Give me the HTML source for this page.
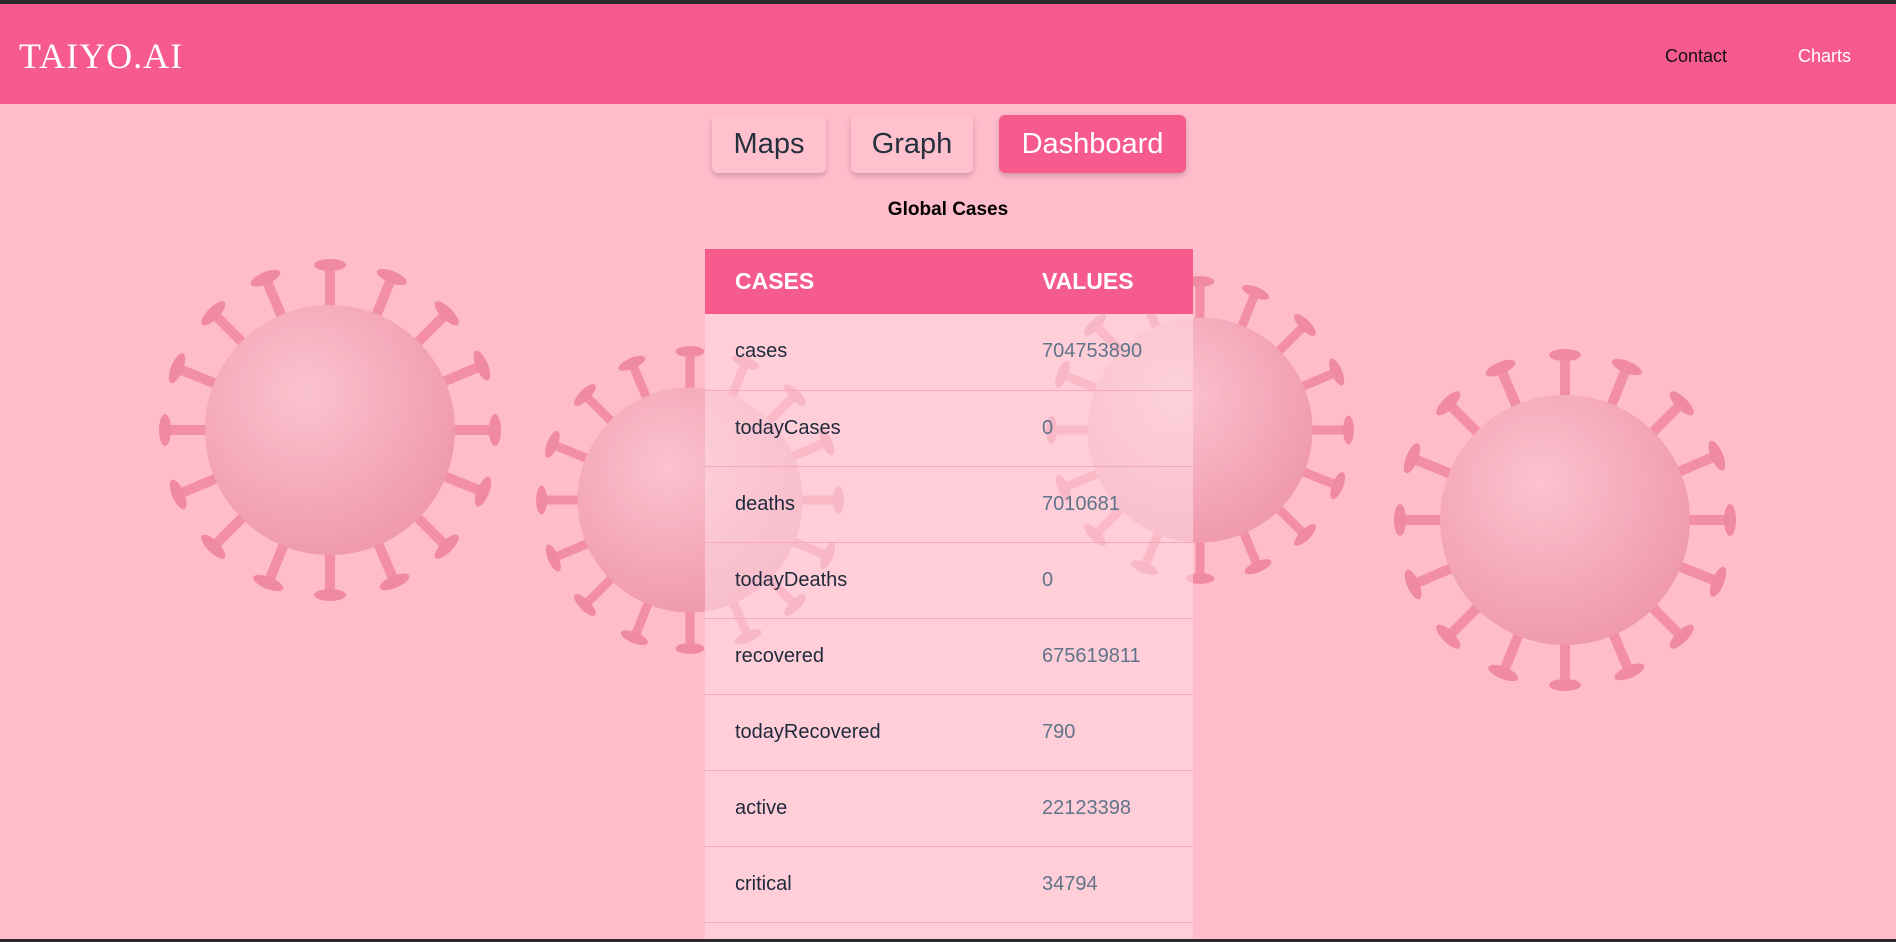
<!DOCTYPE html>
<html style="width:1896px;height:942px;overflow:hidden"><head><meta charset="utf-8"><style>
*{margin:0;padding:0;box-sizing:border-box}
html,body{width:1896px;height:942px;overflow:hidden}
body{background:#ffbccb;font-family:"Liberation Sans",sans-serif;position:relative}
.topbar{position:absolute;left:0;top:0;width:1896px;height:4px;background:#2a2a2e}
.bot{position:absolute;left:0;top:939px;width:1896px;height:3px;background:#2a2a2e}
nav{position:absolute;left:0;top:4px;width:1896px;height:100px;background:#f75b8e}
.logo{position:absolute;left:19px;top:31px;font-family:"Liberation Serif",serif;font-size:36px;color:#fff;letter-spacing:1px}
.nl{position:absolute;top:42px;font-size:18px}
#bg{position:absolute;left:0;top:104px}
.btn{position:absolute;top:115px;height:58px;border-radius:6px;background:#ffc1cd;box-shadow:0 3px 6px rgba(0,0,0,.18);color:#25303e;font-size:29px;line-height:58px;text-align:center}
.title{position:absolute;left:0;width:1896px;top:199px;text-align:center;font-weight:bold;font-size:19px;color:#000}
.wrap{position:absolute;left:705px;top:249px;width:488px;height:690px;overflow:hidden}
table{width:488px;border-collapse:collapse}
th{background:#f55c8d;color:#fff;font-size:23px;font-weight:bold;text-align:left;height:65px}
td{height:76px;font-size:20px;color:#1e293b;border-bottom:1px solid #f7a9bc;background:rgba(255,220,228,.55)}
td.v{color:#5f7488}
th:first-child,td:first-child{padding-left:30px;width:337px}
tr.last td{height:17px;border-bottom:none}
</style></head><body>
<svg id="bg" width="1896" height="835" viewBox="0 104 1896 835">
<defs>
<radialGradient id="g" cx="40%" cy="35%" r="65%"><stop offset="0" stop-color="#fbc3cf"/><stop offset="1" stop-color="#f09aae"/></radialGradient>
<g id="sp"><rect x="-5" y="-165" width="10" height="50" fill="#f28ea5"/><ellipse cx="0" cy="-165" rx="16" ry="6" fill="#ef8aa2"/></g>
<g id="vir">
<use href="#sp"/><use href="#sp" transform="rotate(22)"/><use href="#sp" transform="rotate(45)"/><use href="#sp" transform="rotate(67)"/><use href="#sp" transform="rotate(90)"/><use href="#sp" transform="rotate(112)"/><use href="#sp" transform="rotate(135)"/><use href="#sp" transform="rotate(157)"/><use href="#sp" transform="rotate(180)"/><use href="#sp" transform="rotate(202)"/><use href="#sp" transform="rotate(225)"/><use href="#sp" transform="rotate(247)"/><use href="#sp" transform="rotate(270)"/><use href="#sp" transform="rotate(292)"/><use href="#sp" transform="rotate(315)"/><use href="#sp" transform="rotate(337)"/>
<circle r="125" fill="url(#g)"/>
</g>
</defs>
<rect x="0" y="104" width="1896" height="835" fill="#ffbccb"/>
<use href="#vir" transform="translate(330,430)"/>
<use href="#vir" transform="translate(690,500) scale(0.9)"/>
<use href="#vir" transform="translate(1200,430) scale(0.9)"/>
<use href="#vir" transform="translate(1565,520)"/>
</svg>
<div class="topbar"></div>
<nav><div class="logo">TAIYO.AI</div>
<div class="nl" style="left:1665px;color:#111">Contact</div>
<div class="nl" style="left:1798px;color:#fff">Charts</div></nav>
<div class="btn" style="left:712px;width:114px">Maps</div>
<div class="btn" style="left:851px;width:122px">Graph</div>
<div class="btn" style="left:999px;width:187px;background:#f75b8e;color:#fff">Dashboard</div>
<div class="title">Global Cases</div>
<div class="wrap">
<table>
<tr><th>CASES</th><th>VALUES</th></tr>
<tr><td>cases</td><td class="v">704753890</td></tr>
<tr><td>todayCases</td><td class="v">0</td></tr>
<tr><td>deaths</td><td class="v">7010681</td></tr>
<tr><td>todayDeaths</td><td class="v">0</td></tr>
<tr><td>recovered</td><td class="v">675619811</td></tr>
<tr><td>todayRecovered</td><td class="v">790</td></tr>
<tr><td>active</td><td class="v">22123398</td></tr>
<tr><td>critical</td><td class="v">34794</td></tr>
<tr class="last"><td></td><td></td></tr>
</table>
</div>
<div class="bot"></div>
</body></html>
